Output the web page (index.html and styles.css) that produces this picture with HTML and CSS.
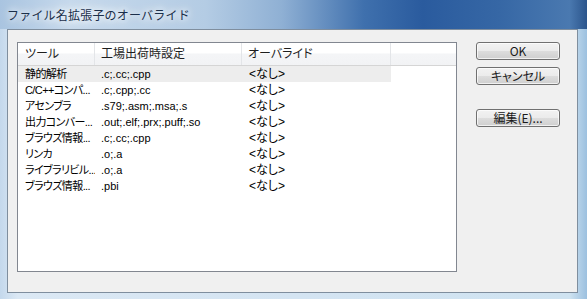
FILE: index.html
```html
<!DOCTYPE html>
<html lang="ja">
<head>
  <meta charset="UTF-8" />
  <title>ファイル名拡張子のオーバライド</title>
  <link rel="stylesheet" href="styles.css">
</head>
<body>
  <div class="window">
    <div class="titlebar">
      <span class="title">ファイル名拡張子のオーバライド</span>
    </div>

    <div class="client">
      <!-- extension list -->
      <div class="listview">
        <div class="lv-header">
          <div class="hcol">ツール</div>
          <div class="hcol">工場出荷時設定</div>
          <div class="hcol">オーバライド</div>
          <div class="hcol"></div>
        </div>
        <div id="rows"></div>
      </div>

      <div class="buttons">
        <button class="btn">OK</button>
        <button class="btn">キャンセル</button>
        <button class="btn btn-edit">編集(E)...</button>
      </div>
    </div>
  </div>

  <script>
    const items = [
      { tool: "静的解析", ext: ".c;.cc;.cpp", selected: true },
      { tool: "C/C++コンパ...", ext: ".c;.cpp;.cc" },
      { tool: "アセンブラ", ext: ".s79;.asm;.msa;.s" },
      { tool: "出力コンバー...", ext: ".out;.elf;.prx;.puff;.so" },
      { tool: "ブラウズ情報...", ext: ".c;.cc;.cpp" },
      { tool: "リンカ", ext: ".o;.a" },
      { tool: "ライブラリビル...", ext: ".o;.a" },
      { tool: "ブラウズ情報...", ext: ".pbi" }
    ];

    const rowsDiv = document.getElementById("rows");
    items.forEach(item => {
      const div = document.createElement("div");
      div.className = item.selected ? "row selected" : "row";
      div.innerHTML = `
        <span class="cell tool">${item.tool}</span>
        <span class="cell ext">${item.ext}</span>
        <span class="cell">&lt;なし&gt;</span>
      `;
      rowsDiv.appendChild(div);
    });
  </script>
</body>
</html>
```

FILE: styles.css
```css
* { box-sizing: border-box; margin: 0; padding: 0; }

body {
  width: 587px;
  height: 299px;
  overflow: hidden;
  font-family: "Noto Sans CJK JP", "Noto Sans", sans-serif;
  font-size: 12px;
  color: #000;
}

.window {
  width: 587px;
  height: 299px;
  display: flex;
  flex-direction: column;
  background: linear-gradient(to right, #c4d8ec 0%, #dbe8f4 3%, #d4e4f2 50%, #cfe3f1 97%, #9cc0df 100%);
}

.titlebar {
  height: 29px;
  padding: 6px 0 0 7px;
  background: linear-gradient(to right, #a9c4e0 0%, #c6d9ec 12%, #b4cce4 35%, #8fb0d4 48%, #3f70ad 62%, #2a5b9e 72%, #3667a5 85%, #4a79b0 97%, #2b558c 100%);
}

.title {
  font-size: 12px;
  line-height: 16px;
  letter-spacing: 0.2px;
  color: #1b2f4a;
  text-shadow: 0 0 6px #fff, 0 0 10px #fff, 0 0 14px #eef5fb;
}

.client {
  margin: 0 9px 6px 7px;
  flex: 1;
  display: flex;
  gap: 19px;
  padding: 12px 0 0 9px;
  background: #f0f0f0;
  border: 1px solid #7f8e9e;
}

.listview {
  width: 440px;
  height: 230px;
  background: #fff;
  border: 1px solid #828790;
  font-family: "Liberation Sans", "Noto Sans CJK JP", sans-serif;
  font-feature-settings: "palt";
}

.lv-header {
  display: grid;
  grid-template-columns: 77px 147px 149px 1fr;
  height: 23px;
  background: linear-gradient(to bottom, #fff 0%, #fff 45%, #f4f5f7 50%, #f2f3f5 100%);
  border-bottom: 1px solid #d5d5d5;
}

.hcol {
  padding: 3px 0 0 6px;
  line-height: 16px;
  color: #1e1e1e;
  border-right: 1px solid #e3e5e8;
}

.hcol:first-child { padding-left: 7px; }
.hcol:last-child { border-right: none; }

.row {
  display: grid;
  grid-template-columns: 77px 147px 149px;
  width: 373px;
  height: 16px;
  line-height: 16px;
}

.row.selected { background: #ededed; }

.cell {
  padding-left: 7px;
  white-space: nowrap;
  overflow: hidden;
}

.cell.tool {
  font-size: 11px;
  letter-spacing: -0.6px;
}

.cell.ext {
  padding-left: 6px;
  font-size: 11px;
}

.buttons {
  display: flex;
  flex-direction: column;
  gap: 7px;
}

.btn {
  width: 84px;
  height: 18px;
  font-family: "Noto Sans CJK JP", "Noto Sans", sans-serif;
  font-feature-settings: "palt";
  font-size: 12px;
  line-height: 14px;
  color: #1a1a1a;
  border: 1px solid #707070;
  border-radius: 3px;
  background: linear-gradient(to bottom, #f2f2f2 0%, #ebebeb 50%, #dddddd 51%, #cfcfcf 100%);
  box-shadow: inset 0 0 0 1px rgba(255,255,255,0.7);
}

.btn-edit { margin-top: 17px; }
```
